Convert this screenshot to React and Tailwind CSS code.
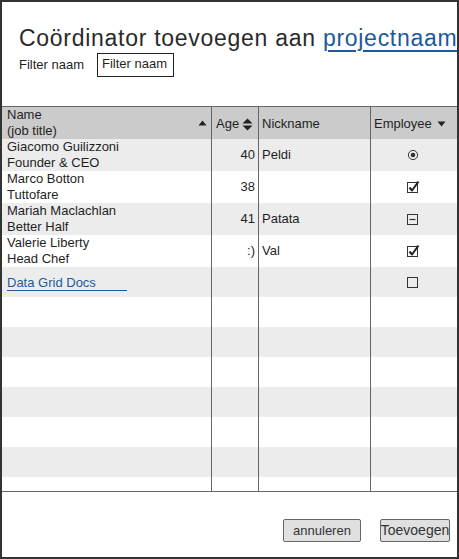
import React from "react";

const font = "font-['Liberation_Sans',Arial,sans-serif]";

function Radio() {
  return (
    <svg width="12" height="12" viewBox="0 0 12 12">
      <circle cx="6" cy="6" r="4.6" fill="none" stroke="#333" strokeWidth="1" />
      <circle cx="6" cy="6" r="2.3" fill="#333" />
    </svg>
  );
}
function Checked() {
  return (
    <svg width="14" height="14" viewBox="0 0 14 14">
      <rect x="1.5" y="2.5" width="10" height="10" fill="none" stroke="#333" strokeWidth="1" />
      <path d="M3.5 7.5 L6 10.5 L12.5 1.5" fill="none" stroke="#222" strokeWidth="2" strokeLinejoin="round" />
    </svg>
  );
}
function Indet() {
  return (
    <svg width="14" height="14" viewBox="0 0 14 14">
      <rect x="1.5" y="2.5" width="10" height="10" fill="none" stroke="#333" strokeWidth="1" />
      <path d="M3.5 7.5 H9.5" stroke="#333" strokeWidth="1.2" />
    </svg>
  );
}
function Empty() {
  return (
    <svg width="14" height="14" viewBox="0 0 14 14">
      <rect x="1.5" y="2.5" width="10" height="10" fill="none" stroke="#333" strokeWidth="1" />
    </svg>
  );
}
function Up() {
  return (
    <svg width="9" height="6" viewBox="0 0 9 6">
      <polygon points="0.5,5.5 4.5,0.5 8.5,5.5" fill="#222" />
    </svg>
  );
}
function Down() {
  return (
    <svg width="9" height="6" viewBox="0 0 9 6">
      <polygon points="0.5,0.5 8.5,0.5 4.5,5.5" fill="#222" />
    </svg>
  );
}
function UpDown() {
  return (
    <svg width="11" height="13" viewBox="0 0 11 13">
      <polygon points="0.5,5.5 5.5,0.5 10.5,5.5" fill="#222" />
      <polygon points="0.5,7.5 10.5,7.5 5.5,12.5" fill="#222" />
    </svg>
  );
}

const rows = [
  { name: "Giacomo Guilizzoni", title: "Founder & CEO", age: "40", nick: "Peldi", icon: <Radio /> },
  { name: "Marco Botton", title: "Tuttofare", age: "38", nick: "", icon: <Checked /> },
  { name: "Mariah Maclachlan", title: "Better Half", age: "41", nick: "Patata", icon: <Indet /> },
  { name: "Valerie Liberty", title: "Head Chef", age: ":)", nick: "Val", icon: <Checked /> },
];

export default function App() {
  return (
    <div className={`${font} w-[459px] h-[559px] border-2 border-[#333] bg-white text-[#1f1f1f] flex flex-col overflow-hidden`}>
      <div className="h-[104px] pl-[17px] pt-[22px] flex flex-col">
        <div className="h-[28px] leading-[28px] text-[23px] tracking-[0.72px] whitespace-nowrap text-[#2a2a2a]">
          Coördinator toevoegen aan{" "}
          <span className="text-[#1b5a9c] underline decoration-[1.5px] underline-offset-[4px]">projectnaam</span>
        </div>
        <div className="mt-[1px] flex items-center h-[24px] text-[13px]">
          <span className="w-[78px]">Filter naam</span>
          <div className="h-[24px] w-[77px] border border-[#222] pl-[4px] pb-[3px] flex items-center">Filter naam</div>
        </div>
      </div>

      <div className="border-t border-b border-[#666] text-[13px] leading-[16px]">
        <div className="flex h-[32px] bg-[#cbcbcb]">
          <div className="w-[210px] border-r border-[#666] pl-[5px] pr-[4px] flex items-center justify-between">
            <div>
              <div>Name</div>
              <div>(job title)</div>
            </div>
            <Up />
          </div>
          <div className="w-[47px] border-r border-[#666] pl-[4px] flex items-center gap-[3px] pt-[2px]">
            <span>Age</span>
            <UpDown />
          </div>
          <div className="w-[112px] border-r border-[#666] pl-[3px] flex items-center pt-[2px]">Nickname</div>
          <div className="flex-1 pl-[3px] flex items-center gap-[5px] pt-[2px]">
            <span>Employee</span>
            <Down />
          </div>
        </div>

        <div className="h-[352px] overflow-hidden">
          {rows.map((r, i) => (
            <div key={i} className={`flex h-[32px] ${i % 2 === 0 ? "bg-[#ececec]" : "bg-white"}`}>
              <div className="w-[210px] border-r border-[#666] pl-[5px]">
                <div>{r.name}</div>
                <div>{r.title}</div>
              </div>
              <div className="w-[47px] border-r border-[#666] pr-[3px] flex items-center justify-end">{r.age}</div>
              <div className="w-[112px] border-r border-[#666] pl-[3px] flex items-center">{r.nick}</div>
              <div className="flex-1 flex items-center justify-center pr-[2px]">{r.icon}</div>
            </div>
          ))}
          <div className="flex h-[30px] bg-[#ececec]">
            <div className="w-[210px] border-r border-[#666] pl-[5px] flex items-center">
              <div className="w-[120px] border-b border-[#1b5a9c] text-[#1b5a9c] leading-[15px] pt-[1px]">Data Grid Docs</div>
            </div>
            <div className="w-[47px] border-r border-[#666]" />
            <div className="w-[112px] border-r border-[#666]" />
            <div className="flex-1 flex items-center justify-center pr-[2px]"><Empty /></div>
          </div>
          {[0, 1, 2, 3, 4, 5, 6].map((k) => (
            <div key={k} className={`flex h-[30px] ${k % 2 === 0 ? "bg-white" : "bg-[#ececec]"}`}>
              <div className="w-[210px] border-r border-[#666]" />
              <div className="w-[47px] border-r border-[#666]" />
              <div className="w-[112px] border-r border-[#666]" />
              <div className="flex-1" />
            </div>
          ))}
        </div>
      </div>

      <div className="flex-1 flex justify-end items-end gap-[19px] pr-[7px] pb-[15px] text-[13px]">
        <button className="w-[78px] h-[23px] bg-[#e0e0e0] border border-[#666] rounded-[2px] text-[#333] flex items-center justify-center">annuleren</button>
        <button className="w-[70px] h-[23px] bg-[#e0e0e0] border border-[#666] rounded-[2px] text-[#333] text-[14px] flex items-center justify-center">Toevoegen</button>
      </div>
    </div>
  );
}
